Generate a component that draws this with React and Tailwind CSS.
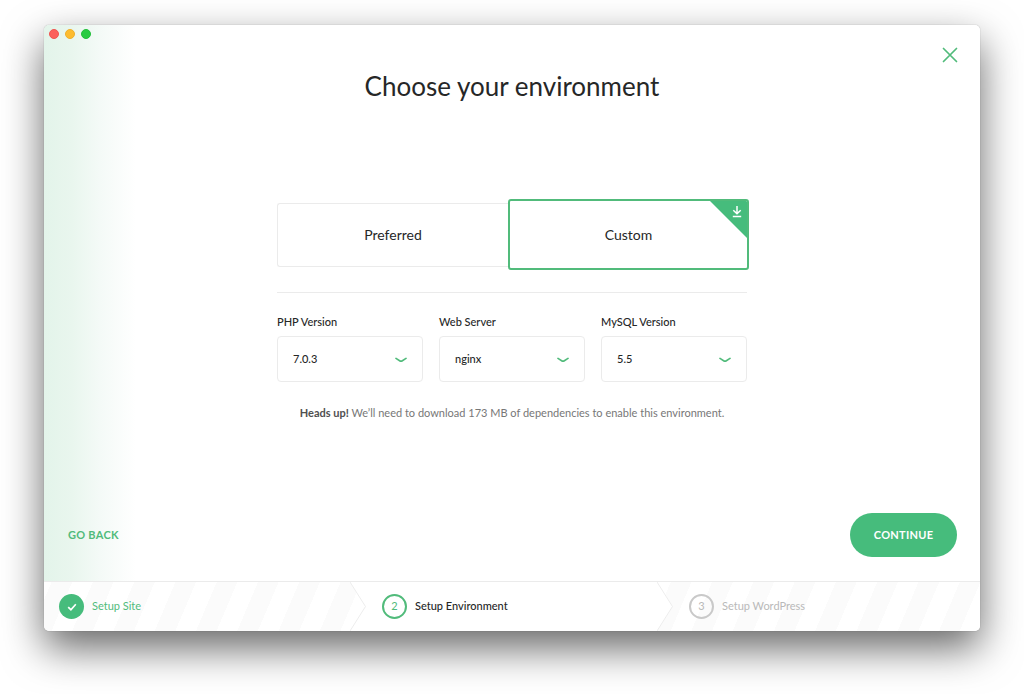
const FIELDS = [
  { id: 'php', label: 'PHP Version', options: ['7.0.3', '5.6.20', '5.3.29'] },
  { id: 'server', label: 'Web Server', options: ['nginx', 'apache'] },
  { id: 'mysql', label: 'MySQL Version', options: ['5.5', '5.6'] },
];

function SelectField({ id, label, options }) {
  return (
    <div className="min-w-0">
      <label htmlFor={id} className="block text-[11px] leading-4 font-medium text-[#262727]">
        {label}
      </label>
      <div className="relative mt-1.5">
        <select
          id={id}
          className="block h-[46px] w-full appearance-none rounded-[4px] border border-[#ebebeb] bg-white pl-[15px] pr-8 text-[11px] font-medium text-[#262727]"
        >
          {options.map((o) => (
            <option key={o}>{o}</option>
          ))}
        </select>
        <svg
          className="pointer-events-none absolute right-4 top-5 h-2 w-3"
          viewBox="0 0 12 8"
          fill="none"
          stroke="#51bb7b"
          strokeWidth="1.7"
          strokeLinecap="round"
          aria-hidden="true"
        >
          <path d="M1 2.4L5 4.9Q6 5.4 7 4.9L11 2.4" />
        </svg>
      </div>
    </div>
  );
}

function ChevronLine({ className }) {
  return (
    <svg
      className={className}
      viewBox="0 0 16 49"
      preserveAspectRatio="none"
      fill="none"
      stroke="#ededed"
      aria-hidden="true"
    >
      <path d="M0 0L15.5 24.5L0 49" />
    </svg>
  );
}

export default function App() {
  return (
    <div className="flex min-h-screen bg-white px-11 pt-[25px] pb-[63px] font-[Lato,'Noto_Sans',sans-serif] text-[#262727]">
      <div className="flex min-w-0 flex-1 flex-col overflow-hidden rounded-[5px] bg-white shadow-[0_0_1px_rgba(0,0,0,0.45),0_17px_40px_rgba(0,0,0,0.6)]">
        <main className="relative flex flex-1 flex-col bg-[linear-gradient(90deg,#e3f4ea_0px,#e9f6ee_28px,#f4faf7_56px,#ffffff_92px)] px-6 pt-[45px] pb-6">
          <div className="absolute left-[5px] top-1 flex gap-1.5" aria-hidden="true">
            <span className="size-2.5 rounded-full border border-[#ee5650] bg-[#fc605b]" />
            <span className="size-2.5 rounded-full border border-[#eeaf2c] bg-[#fdbc2f]" />
            <span className="size-2.5 rounded-full border border-[#22bf3a] bg-[#28cb41]" />
          </div>
          <button type="button" aria-label="Close" className="absolute right-[22px] top-[22px]">
            <svg className="size-4" viewBox="0 0 16 16" stroke="#51bb7b" strokeWidth="1.7" strokeLinecap="round" aria-hidden="true">
              <path d="M1.5 1.5L14.5 14.5M14.5 1.5L1.5 14.5" />
            </svg>
          </button>

          <h1 className="text-center text-[26px] leading-8">Choose your environment</h1>

          <div className="mx-auto mt-[97px] w-full max-w-[470px]">
            <div className="-mr-0.5 flex items-center">
              <button type="button" className="h-16 flex-1 rounded-l-[3px] border border-r-0 border-[#ebebeb] bg-white text-sm">
                Preferred
              </button>
              <button
                type="button"
                aria-pressed="true"
                className="relative h-[71px] w-[241px] overflow-hidden rounded-[3px] border-2 border-[#51bb7b] bg-white text-sm"
              >
                Custom
                <svg className="absolute -right-0.5 -top-0.5 size-[41px]" viewBox="0 0 41 41" fill="none" aria-hidden="true">
                  <path d="M0 0H41V41Z" fill="#46bc7c" />
                  <path
                    d="M29 7V14.5M25.3 11.2L29 14.8L32.7 11.2M24.8 17.5H33.2"
                    stroke="#fff"
                    strokeWidth="1.5"
                  />
                </svg>
              </button>
            </div>

            <hr className="mt-[22px] border-[#ebebeb]" />

            <div className="mt-[21px] grid grid-cols-3 gap-4">
              {FIELDS.map((f) => (
                <SelectField key={f.id} {...f} />
              ))}
            </div>

            <p className="mt-[23px] text-center text-[11px] leading-4 text-[#777777]">
              <strong className="font-bold text-[#505050]">Heads up!</strong> We’ll need to download 173 MB of
              dependencies to enable this environment.
            </p>
          </div>

          <div className="-mr-px mt-auto flex items-center justify-between">
            <button type="button" className="text-[11px] font-bold tracking-wide text-[#51bb7b]">
              GO BACK
            </button>
            <button
              type="button"
              className="h-11 w-[107px] rounded-full bg-[#46bc7c] text-[11px] font-bold tracking-wide text-white"
            >
              CONTINUE
            </button>
          </div>
        </main>

        <footer className="border-t border-[#ebebeb] bg-[repeating-linear-gradient(113deg,#ffffff_0px,#ffffff_7px,#fbfbfb_7px,#fbfbfb_26px,#ffffff_26px,#ffffff_38px)]">
          <ol className="grid h-[49px] grid-cols-[306fr_307fr_323fr] text-[11px]">
            <li className="flex items-center gap-2 pl-[15px] text-[#51bb7b]">
              <span className="flex size-[25px] items-center justify-center rounded-full bg-[#46bc7c]">
                <svg className="size-2.5" viewBox="0 0 10 10" fill="none" stroke="#fff" strokeWidth="1.7" aria-hidden="true">
                  <path d="M1.2 5.2L3.9 7.7L8.8 2.2" />
                </svg>
              </span>
              Setup Site
            </li>
            <li aria-current="step" className="relative flex items-center gap-2 pl-8 font-medium text-[#262727]">
              <span
                className="absolute inset-y-0 left-0 -right-4 bg-white [clip-path:polygon(0_0,calc(100%-16px)_0,100%_50%,calc(100%-16px)_100%,0_100%,16px_50%)]"
                aria-hidden="true"
              />
              <ChevronLine className="absolute left-0 top-0 h-full w-4" />
              <ChevronLine className="absolute -right-4 top-0 h-full w-4" />
              <span className="relative flex size-[25px] items-center justify-center rounded-full border-2 border-[#51bb7b] font-normal text-[#51bb7b]">
                2
              </span>
              <span className="relative">Setup Environment</span>
            </li>
            <li className="flex items-center gap-2 pl-8 text-[#b9b9b9]">
              <span className="flex size-[25px] items-center justify-center rounded-full border-2 border-[#c9c9c9]">
                3
              </span>
              Setup WordPress
            </li>
          </ol>
        </footer>
      </div>
    </div>
  );
}
